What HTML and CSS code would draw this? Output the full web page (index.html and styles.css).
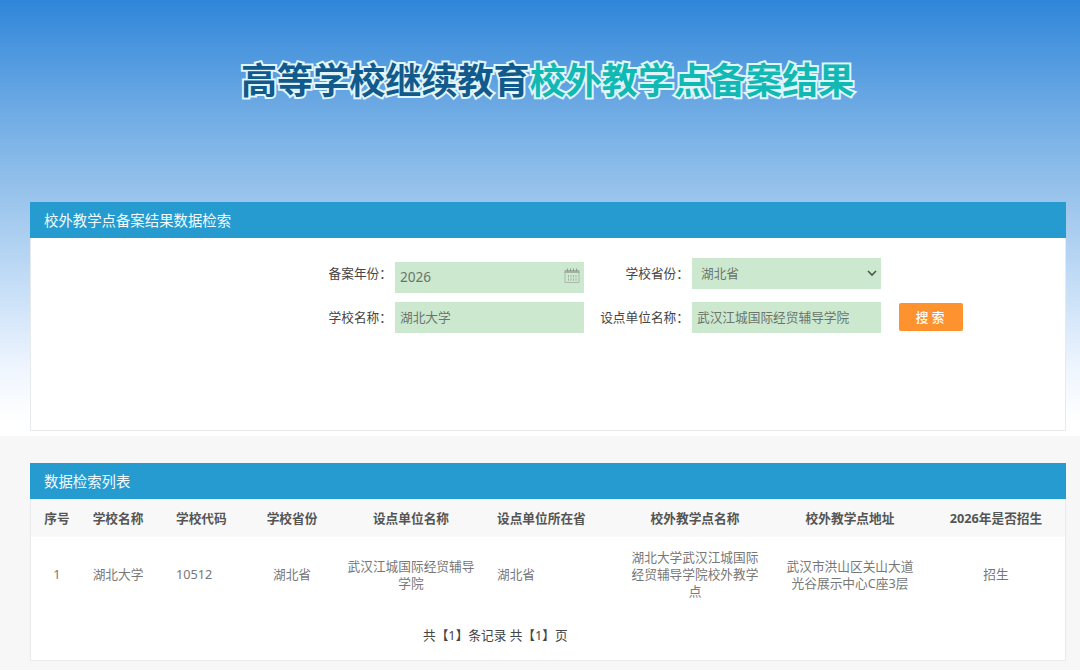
FILE: index.html
```html
<!DOCTYPE html>
<html lang="zh-CN">
<head>
    <meta charset="UTF-8">
    <title>高等学校继续教育校外教学点备案结果</title>
    <link rel="stylesheet" href="styles.css">
</head>
<body>
    <div class="banner">
        <h1 class="title"><span class="title-dark">高等学校继续教育</span><span class="title-green">校外教学点备案结果</span></h1>

        <div class="panel search-panel">
            <h2 class="panel-head">校外教学点备案结果数据检索</h2>
            <form class="search-form">
                <label for="year">备案年份：</label>
                <div class="field year-field">
                    <input type="text" id="year" name="year" value="2026">
                    <svg class="calendar" width="16" height="15" viewBox="0 0 16 15">
                        <path d="M1 4v10.5h14V4" fill="none" stroke="#a9b9ab"/>
                        <path d="M.5 2h15v3H.5z" fill="#a3b2a5"/>
                        <path d="M3.5 .5v3M6.5 .5v3M9.5 .5v3M12.5 .5v3" stroke="#8d9c90"/>
                        <path d="M4.5 7v6M7 7v6M9.5 7v6M12 7v6" stroke="#a3b2a5" stroke-dasharray="2.4 1"/>
                    </svg>
                </div>
                <label for="province">学校省份：</label>
                <div class="field province-field">
                    <select id="province" name="province">
                        <option>湖北省</option>
                    </select>
                    <svg class="arrow" width="10" height="7" viewBox="0 0 10 7">
                        <path d="M1 1l4 4 4-4" fill="none" stroke="#4c5a4e" stroke-width="1.7"/>
                    </svg>
                </div>
                <span></span>

                <label for="school">学校名称：</label>
                <div class="field"><input type="text" id="school" name="school" value="湖北大学"></div>
                <label for="unit">设点单位名称：</label>
                <div class="field"><input type="text" id="unit" name="unit" value="武汉江城国际经贸辅导学院"></div>
                <button type="button">搜 索</button>
            </form>
        </div>
    </div>

    <div class="panel list-panel">
        <h2 class="panel-head">数据检索列表</h2>
        <table>
            <colgroup>
                <col class="w-no"><col class="w-school"><col class="w-code"><col class="w-prov"><col class="w-unit">
                <col class="w-unitprov"><col class="w-name"><col class="w-addr"><col class="w-enroll">
            </colgroup>
            <thead>
                <tr>
                    <th>序号</th>
                    <th>学校名称</th>
                    <th class="code">学校代码</th>
                    <th>学校省份</th>
                    <th>设点单位名称</th>
                    <th class="unit-prov">设点单位所在省</th>
                    <th>校外教学点名称</th>
                    <th class="addr">校外教学点地址</th>
                    <th class="enroll">2026年是否招生</th>
                </tr>
            </thead>
            <tbody>
                <tr>
                    <td>1</td>
                    <td>湖北大学</td>
                    <td class="code">10512</td>
                    <td>湖北省</td>
                    <td>武汉江城国际经贸辅导学院</td>
                    <td class="unit-prov">湖北省</td>
                    <td>湖北大学武汉江城国际经贸辅导学院校外教学点</td>
                    <td class="addr">武汉市洪山区关山大道光谷展示中心C座3层</td>
                    <td class="enroll">招生</td>
                </tr>
            </tbody>
        </table>
        <p class="pager">共【1】条记录 共【1】页</p>
    </div>
</body>
</html>
```
FILE: styles.css
```css
* {
    box-sizing: border-box;
}

body {
    margin: 0;
    height: 670px;
    overflow: hidden;
    background-color: #f7f7f7;
    font-family: "Noto Sans", "Noto Sans CJK SC", sans-serif;
    font-size: 12.7px;
    color: #444;
}

.banner {
    height: 436px;
    padding: 53px 14px 0 30px;
    background: linear-gradient(#2f86d9 0%, #6eaae4 25%, #9bc5ec 46%, #cde2f8 69%, #f0f6fe 85%, #fff 97%);
}

.title {
    margin: 0 0 99px 211px;
    font-family: "Noto Sans CJK SC", sans-serif;
    font-size: 36.1px;
    line-height: 50px;
    font-weight: bold;
    white-space: nowrap;
    -webkit-text-stroke: 4px #e0f5fc;
    paint-order: stroke fill;
}

.title-dark {
    color: #125a8c;
}

.title-green {
    color: #12b9b2;
}

.panel {
    background-color: #fff;
    border: 1px solid #e8ebee;
    border-top: none;
}

.search-panel {
    height: 229px;
}

.panel-head {
    margin: 0 -1px;
    height: 36px;
    padding: 1px 0 0 14px;
    background-color: #259bcf;
    color: #f2fbff;
    font-size: 14.4px;
    font-weight: normal;
    line-height: 36px;
}

.search-form {
    display: grid;
    grid-template-columns: 68px 189px 108px 189px 64px;
    grid-template-rows: 35px 31px;
    row-gap: 9px;
    padding: 20px 0 0 296px;
}

.search-form label {
    line-height: 31px;
    text-align: right;
    padding-right: 3px;
    white-space: nowrap;
}

.field {
    display: flex;
    align-items: center;
    height: 31px;
    background-color: #cce8cf;
}

.year-field {
    margin-top: 4px;
    padding-right: 4px;
}

.province-field {
    padding-right: 4px;
}

.calendar {
    margin-bottom: 4px;
}

.field input,
.field select {
    flex: 1;
    min-width: 0;
    height: 31px;
    padding: 0 0 2px 5px;
    border: none;
    outline: none;
    background: none;
    color: #6b746c;
    font: inherit;
}

.year-field input {
    font-size: 13.6px;
}

.field select {
    appearance: none;
    padding-left: 9px;
}

button {
    width: 64px;
    height: 28px;
    margin: 1px 0 0 18px;
    padding: 0 2px 1px 0;
    border: none;
    border-radius: 2px;
    background-color: #fd922f;
    color: #fff;
    font: inherit;
    font-weight: 500;
    cursor: pointer;
}

.list-panel {
    height: 198px;
    margin: 27px 14px 0 30px;
}

table {
    width: 100%;
    table-layout: fixed;
    border-collapse: collapse;
}

th,
td {
    padding: 0 6px;
    text-align: center;
    line-height: 17px;
}

th {
    height: 38px;
    padding: 1px 0 0;
    background-color: #f8f8f8;
    color: #555;
    white-space: nowrap;
}

td {
    height: 75px;
    color: #777;
}

.w-no { width: 52px; }
.w-school { width: 70px; }
.w-code { width: 90px; }
.w-prov { width: 98px; }
.w-unit { width: 140px; }
.w-unitprov { width: 144px; }
.w-name { width: 140px; }
.w-addr { width: 170px; }

.code {
    padding-left: 23px;
    text-align: left;
}

.unit-prov {
    padding-left: 16px;
    text-align: left;
}

.addr {
    padding-left: 18px;
    padding-right: 18px;
}

.enroll {
    padding-left: 0;
    padding-right: 8px;
}

.pager {
    margin: 13px 0 0 392px;
    line-height: 20px;
}
```
